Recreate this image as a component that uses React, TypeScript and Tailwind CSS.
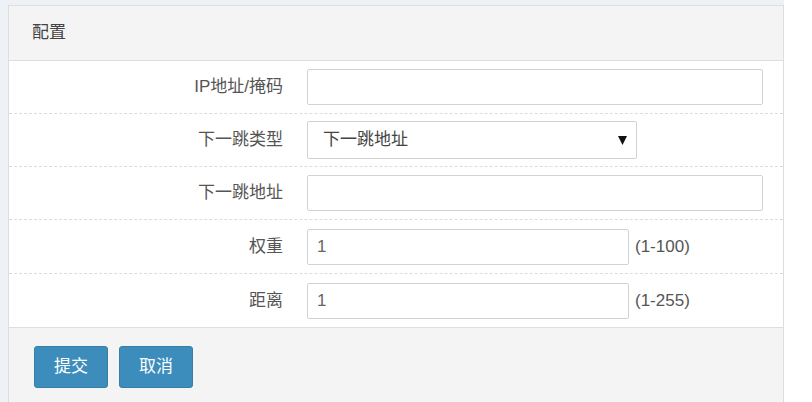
import { useState } from 'react';

interface FieldRowProps {
    label: string;
    children: React.ReactNode;
    rowH: string;
    last?: boolean;
}

const FieldRow = ({ label, children, rowH, last }: FieldRowProps) => {
    return (
        <div className={`flex items-center ${rowH} ${last ? '' : 'border-b border-dashed border-[#dcdcdc]'}`}>
            <label className="w-[274px] shrink-0 text-right text-[17px] text-[#555]">{label}</label>
            <div className="ml-[24px] flex items-center">{children}</div>
        </div>
    );
}

export default function App() {

    const [ipMask, SetIpMask] = useState('');
    const [hopType, SetHopType] = useState('addr');
    const [hopAddr, SetHopAddr] = useState('');
    const [weight, SetWeight] = useState('1');
    const [distance, SetDistance] = useState('1');

    const inputCls = "h-[36px] rounded-[2px] border border-[#d2d2d2] bg-white px-[9px] text-[17px] text-[#666] outline-none";

    return (
        <div className="min-h-[402px] w-[784px] bg-[#eef1f5] pl-[8px] pt-[5px]"
            style={{ fontFamily: '"Liberation Sans", "Noto Sans CJK SC", sans-serif' }}>
            <div className="flex min-h-[397px] flex-col border border-b-0 border-[#dedede] bg-white">

                <div className="flex h-[55px] items-center border-b border-[#dedede] bg-[#f4f4f4] pl-[23px]">
                    <span className="text-[17px] text-[#444]">配置</span>
                </div>

                <FieldRow label="IP地址/掩码" rowH="h-[53px]">
                    <input className={`${inputCls} w-[456px]`} value={ipMask} onChange={(e) => SetIpMask(e.target.value)} />
                </FieldRow>

                <FieldRow label="下一跳类型" rowH="h-[53px]">
                    <div className="relative">
                        <select
                            value={hopType}
                            onChange={(e) => SetHopType(e.target.value)}
                            className="h-[38px] w-[330px] appearance-none rounded-[2px] border border-[#d2d2d2] bg-white pl-[15px] text-[17px] text-[#444] outline-none">
                            <option value="addr">下一跳地址</option>
                            <option value="iface">出接口</option>
                        </select>
                        <svg className="pointer-events-none absolute right-[10px] top-[15px] h-[9px] w-[9px]" viewBox="0 0 9 9">
                            <polygon points="0,0 9,0 4.5,9" fill="#111" />
                        </svg>
                    </div>
                </FieldRow>

                <FieldRow label="下一跳地址" rowH="h-[53px]">
                    <input className={`${inputCls} w-[456px]`} value={hopAddr} onChange={(e) => SetHopAddr(e.target.value)} />
                </FieldRow>

                <FieldRow label="权重" rowH="h-[54px]">
                    <input className={`${inputCls} w-[322px]`} value={weight} onChange={(e) => SetWeight(e.target.value)} />
                    <span className="ml-[6px] text-[17px] text-[#555]">(1-100)</span>
                </FieldRow>

                <FieldRow label="距离" rowH="h-[53px]" last>
                    <input className={`${inputCls} w-[322px]`} value={distance} onChange={(e) => SetDistance(e.target.value)} />
                    <span className="ml-[6px] text-[17px] text-[#555]">(1-255)</span>
                </FieldRow>

                <div className="flex flex-1 gap-[11px] border-t border-[#dedede] bg-[#f4f4f4] pl-[25px] pt-[18px]">
                    <button className="h-[42px] w-[74px] rounded-[3px] border border-[#367fa9] bg-[#3c8dbc] text-[17px] text-white">提交</button>
                    <button className="h-[42px] w-[74px] rounded-[3px] border border-[#367fa9] bg-[#3c8dbc] text-[17px] text-white">取消</button>
                </div>

            </div>
        </div>
    );
}
